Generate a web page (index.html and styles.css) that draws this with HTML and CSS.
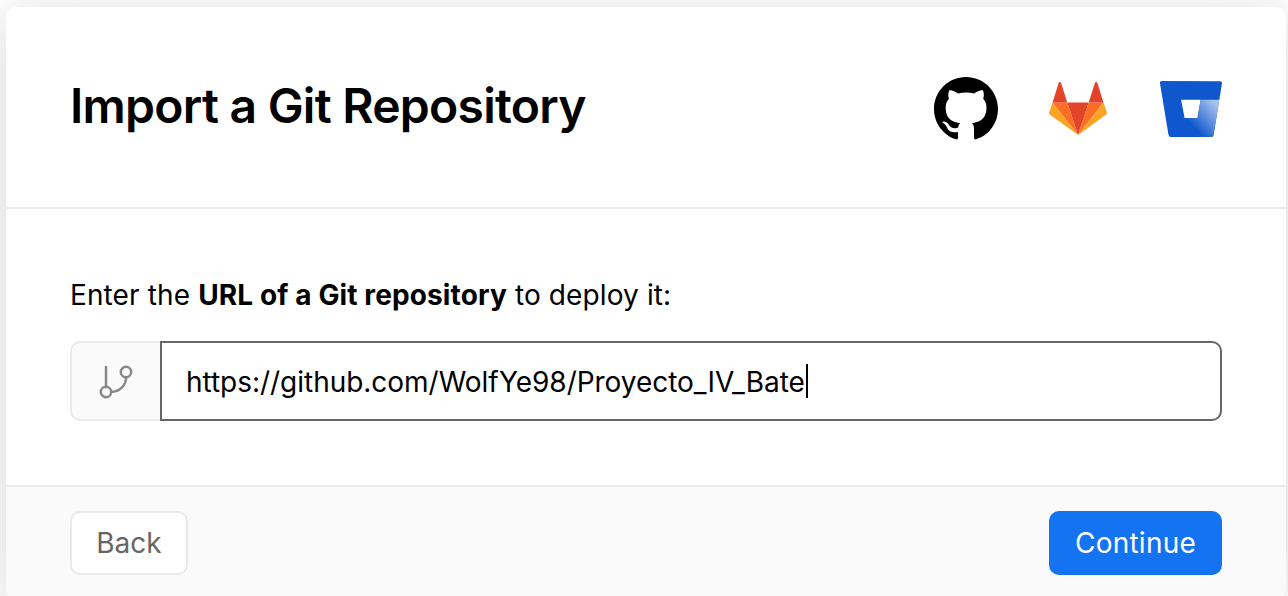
FILE: index.html
```html
<!DOCTYPE html>
<html lang="en">
<head>
<meta charset="utf-8">
<title>Import a Git Repository</title>
<link rel="stylesheet" href="styles.css">
</head>
<body>
<main class="card">
  <header class="card-header">
    <h1 class="title">Import a Git Repository</h1>
    <div class="providers">
      <svg class="github" viewBox="0 0 16 16" aria-label="GitHub"><path fill="#000" fill-rule="evenodd" d="M8 0C3.58 0 0 3.58 0 8c0 3.54 2.29 6.53 5.47 7.59.4.07.55-.17.55-.38 0-.19-.01-.82-.01-1.49-2.01.37-2.53-.49-2.69-.94-.09-.23-.48-.94-.82-1.13-.28-.15-.68-.52-.01-.53.63-.01 1.08.58 1.23.82.72 1.21 1.87.87 2.33.66.07-.52.28-.87.51-1.07-1.78-.2-3.64-.89-3.64-3.95 0-.87.31-1.59.82-2.15-.08-.2-.36-1.02.08-2.12 0 0 .67-.21 2.2.82.64-.18 1.32-.27 2-.27s1.36.09 2 .27c1.53-1.04 2.2-.82 2.2-.82.44 1.1.16 1.92.08 2.12.51.56.82 1.27.82 2.15 0 3.07-1.87 3.75-3.65 3.95.29.25.54.73.54 1.48 0 1.07-.01 1.93-.01 2.2 0 .21.15.46.55.38A8.013 8.013 0 0 0 16 8c0-4.42-3.58-8-8-8z"/></svg>
      <svg class="gitlab" viewBox="0 0 58 53" aria-label="GitLab">
        <path fill="#e24329" d="M29 53 39.7 20.5H18.3z"/>
        <path fill="#fc6d26" d="M29 53 18.3 20.5H3.5z"/>
        <path fill="#fca326" d="M3.5 20.5.2 30.3a2 2 0 0 0 .8 2.4L29 53z"/>
        <path fill="#e24329" d="M3.5 20.5h14.8L12 .8c-.4-1.1-1.9-1.1-2.3 0z"/>
        <path fill="#fc6d26" d="m29 53 10.7-32.5h14.8z"/>
        <path fill="#fca326" d="m54.5 20.5 3.3 9.8a2 2 0 0 1-.8 2.4L29 53z"/>
        <path fill="#e24329" d="M54.5 20.5H39.7L46 .8c.4-1.1 1.9-1.1 2.3 0z"/>
      </svg>
      <svg class="bitbucket" viewBox="0 6.26 62.42 56.13" aria-label="Bitbucket">
        <defs><linearGradient id="fold" x1="60" y1="27" x2="33" y2="52" gradientUnits="userSpaceOnUse"><stop offset=".1" stop-color="#abc4ee"/><stop offset="1" stop-color="#0f57cc"/></linearGradient></defs>
        <path fill="#0f57cc" d="M2 6.26A2 2 0 0 0 0 8.58l8.49 51.54a2.72 2.72 0 0 0 2.66 2.27h40.73a2 2 0 0 0 2-1.68l8.49-52.12a2 2 0 0 0-2-2.32zm35.75 37.25h-13L21.23 25.12H40.9z"/>
        <path fill="url(#fold)" d="M59.67 25.12H40.9l-3.15 18.39h-13L9.4 61.73a2.71 2.71 0 0 0 1.75.66h40.74a2 2 0 0 0 2-1.68z"/>
      </svg>
    </div>
  </header>
  <section class="card-body">
    <p class="prompt">Enter the <b>URL of a Git repository</b> to deploy it:</p>
    <div class="field">
      <div class="field-icon">
        <svg class="branch" viewBox="0 0 34 34" fill="none" stroke="#888" stroke-width="2.5" stroke-linecap="round" aria-hidden="true"><path d="M7 2v20.300M27.200 12.200C27 20.500 20.500 27 12.100 27"/><circle cx="7" cy="27" r="5.200"/><circle cx="27" cy="7" r="5.200"/></svg>
      </div>
      <div class="field-input" role="textbox"><span>https://github.com/WolfYe98/Proyecto_IV_Bate</span><i class="caret"></i></div>
    </div>
  </section>
  <footer class="card-footer">
    <button class="btn btn-back">Back</button>
    <button class="btn btn-continue">Continue</button>
  </footer>
</main>
</body>
</html>
```
FILE: styles.css
```css
* { box-sizing: border-box; }

body {
  margin: 0;
  height: 596px;
  overflow: hidden;
  padding: 7px 2px 0 6px;
  background: #fff;
  font-family: Inter, sans-serif;
  color: #000;
}

.card {
  height: 592px;
  display: flex;
  flex-direction: column;
  background: #fff;
  border-radius: 10px;
  box-shadow: 0 10px 60px rgba(0, 0, 0, .17);
}

.card-header {
  height: 202px;
  padding: 0 64px;
  display: flex;
  align-items: center;
  justify-content: space-between;
  border-bottom: 2px solid #eaeaea;
}

.title {
  margin: 0 0 2px;
  font-size: 48px;
  line-height: 72px;
  font-weight: 600;
  letter-spacing: -0.74px;
}

.providers {
  display: flex;
  align-items: center;
  padding-top: 4px;
}

.github { width: 64px; height: 64px; margin-right: 51px; }
.gitlab { width: 58px; height: 53px; margin: 0 53px 2px 0; }
.bitbucket { width: 62px; height: 56px; }

.card-body {
  height: 276px;
  padding: 63px 64px 0;
}

.prompt {
  margin: 0 0 23px;
  font-size: 28px;
  line-height: 46px;
  letter-spacing: 0.12px;
}

.prompt b { font-weight: 700; }

.field {
  display: flex;
  height: 80px;
}

.field-icon {
  width: 90px;
  padding-top: 1px;
  display: flex;
  align-items: center;
  justify-content: center;
  background: #fafafa;
  border: 2px solid #eaeaea;
  border-right: 0;
  border-radius: 10px 0 0 10px;
}

.branch { width: 34px; height: 34px; }

.field-input {
  flex: 1;
  padding: 0 24px;
  display: flex;
  align-items: center;
  border: 2px solid #666;
  border-radius: 0 10px 10px 0;
  font-size: 28px;
  letter-spacing: -0.03px;
}

.field-input span { padding-top: 2px; }

.caret {
  width: 2px;
  height: 34px;
  margin-left: 1px;
  background: #000;
}

.card-footer {
  flex: 1;
  padding: 24px 64px;
  display: flex;
  justify-content: space-between;
  background: #fafafa;
  border-top: 2px solid #eaeaea;
  border-radius: 0 0 10px 10px;
}

.btn {
  height: 64px;
  padding: 0;
  border-radius: 10px;
  font: 400 28px Inter, sans-serif;
}

.btn-back {
  width: 118px;
  color: #666;
  background: #fff;
  border: 2px solid #eaeaea;
}

.btn-continue {
  width: 173px;
  color: #fff;
  background: #1473f0;
  border: 0;
  letter-spacing: 0.25px;
}
```
